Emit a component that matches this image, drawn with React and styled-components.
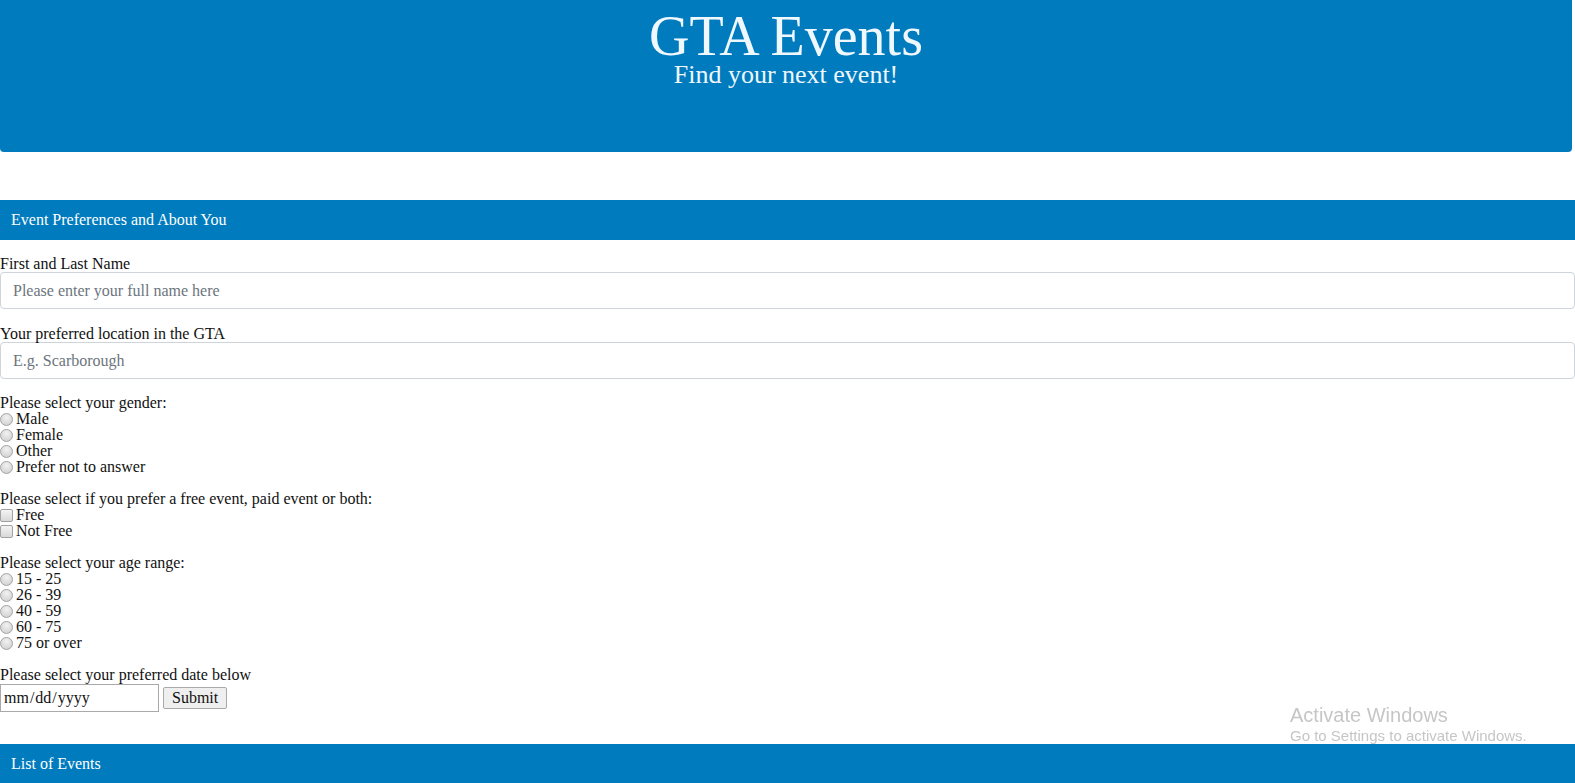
import styled, { createGlobalStyle } from "styled-components";

const GlobalStyle = createGlobalStyle`
  html {
    overflow: hidden;
  }
  body {
    margin: 0;
    font-family: "Liberation Serif", "Times New Roman", serif;
    font-size: 16px;
    color: #111;
  }
  * {
    box-sizing: border-box;
  }
`;

const BLUE = "#007bbd";

const Header = styled.header`
  width: calc(100% - 3px);
  height: 152px;
  padding-top: 10px;
  margin-bottom: 48px;
  background-color: ${BLUE};
  border-radius: 0 0 4px 4px;
  text-align: center;
  color: aliceblue;
`;

const Title = styled.h1`
  margin: 0;
  font-size: 56px;
  line-height: 52px;
  font-weight: normal;
`;

const Subtitle = styled.p`
  margin: 0;
  font-size: 26px;
  line-height: 26px;
`;

const SectionBar = styled.h2`
  position: relative;
  z-index: 1;
  display: flex;
  align-items: center;
  height: 40px;
  margin: 0;
  padding: 0 11px;
  background-color: ${BLUE};
  color: white;
  font-size: 16px;
  font-weight: normal;
`;

const Form = styled.form`
  padding-top: 16px;
  line-height: 16px;
`;

const Group = styled.div`
  margin-bottom: ${(p) => p.$gap || 16}px;
`;

const Label = styled.label`
  display: block;
  height: 16px;
`;

const TextInput = styled.input`
  display: block;
  width: 100%;
  height: 37px;
  padding: 0 12px;
  border: 1px solid #ced4da;
  border-radius: 4px;
  font-family: inherit;
  font-size: 16px;
  color: #495057;
  &::placeholder {
    color: #6c757d;
  }
`;

const Option = styled.label`
  display: flex;
  align-items: center;
  height: 16px;
  input {
    appearance: none;
    width: 13px;
    height: 13px;
    margin: 0 3px 0 0;
    border: 1px solid #a3a3a3;
    background: radial-gradient(circle at 50% 30%, #f2f2f2 0%, #d6d6d6 75%);
  }
  input[type="radio"] {
    border-radius: 50%;
  }
  input[type="checkbox"] {
    border-radius: 2px;
    background: linear-gradient(#f4f4f4, #d8d8d8);
  }
  input:checked {
    background: radial-gradient(circle, #333 0 30%, #e4e4e4 35%);
  }
`;

const DateRow = styled.div`
  display: flex;
  align-items: center;
  gap: 4px;
  height: 29px;
`;

const DateInput = styled.input`
  width: 159px;
  height: 28px;
  padding: 0 2px;
  border: 1px solid #a9a9a9;
  font-family: inherit;
  font-size: 16px;
  color: #111;
  &::-webkit-calendar-picker-indicator {
    display: none;
  }
`;

const SubmitButton = styled.button`
  height: 22px;
  padding: 0 8px;
  border: 1px solid #a9a9a9;
  border-radius: 2px;
  background-color: #efefef;
  font-family: inherit;
  font-size: 16px;
  color: #111;
`;

const Watermark = styled.div`
  position: fixed;
  left: 1290px;
  top: 704px;
  font-family: "Liberation Sans", Arial, sans-serif;
  color: #c6c6c6;
  pointer-events: none;
`;

const WatermarkTitle = styled.div`
  font-size: 20px;
  line-height: 22px;
`;

const WatermarkHint = styled.div`
  font-size: 15px;
  line-height: 19px;
`;

const genders = ["Male", "Female", "Other", "Prefer not to answer"];
const prices = ["Free", "Not Free"];
const ages = ["15 - 25", "26 - 39", "40 - 59", "60 - 75", "75 or over"];

const App = () => {
  return (
    <>
      <GlobalStyle />
      <Header>
        <Title>GTA Events</Title>
        <Subtitle>Find your next event!</Subtitle>
      </Header>

      <SectionBar>Event Preferences and About You</SectionBar>
      <Form onSubmit={(e) => e.preventDefault()}>
        <Group $gap={17}>
          <Label htmlFor="name">First and Last Name</Label>
          <TextInput id="name" placeholder="Please enter your full name here" />
        </Group>
        <Group>
          <Label htmlFor="location">Your preferred location in the GTA</Label>
          <TextInput id="location" placeholder="E.g. Scarborough" />
        </Group>
        <Group>
          <Label as="div">Please select your gender:</Label>
          {genders.map((g) => (
            <Option key={g}>
              <input type="radio" name="gender" value={g} />
              {g}
            </Option>
          ))}
        </Group>
        <Group>
          <Label as="div">
            Please select if you prefer a free event, paid event or both:
          </Label>
          {prices.map((p) => (
            <Option key={p}>
              <input type="checkbox" name="price" value={p} />
              {p}
            </Option>
          ))}
        </Group>
        <Group>
          <Label as="div">Please select your age range:</Label>
          {ages.map((a) => (
            <Option key={a}>
              <input type="radio" name="age" value={a} />
              {a}
            </Option>
          ))}
        </Group>
        <Group $gap={32}>
          <Label htmlFor="date">Please select your preferred date below</Label>
          <DateRow>
            <DateInput id="date" type="date" />
            <SubmitButton type="submit">Submit</SubmitButton>
          </DateRow>
        </Group>
      </Form>

      <SectionBar>List of Events</SectionBar>

      <Watermark>
        <WatermarkTitle>Activate Windows</WatermarkTitle>
        <WatermarkHint>Go to Settings to activate Windows.</WatermarkHint>
      </Watermark>
    </>
  );
};

export default App;
